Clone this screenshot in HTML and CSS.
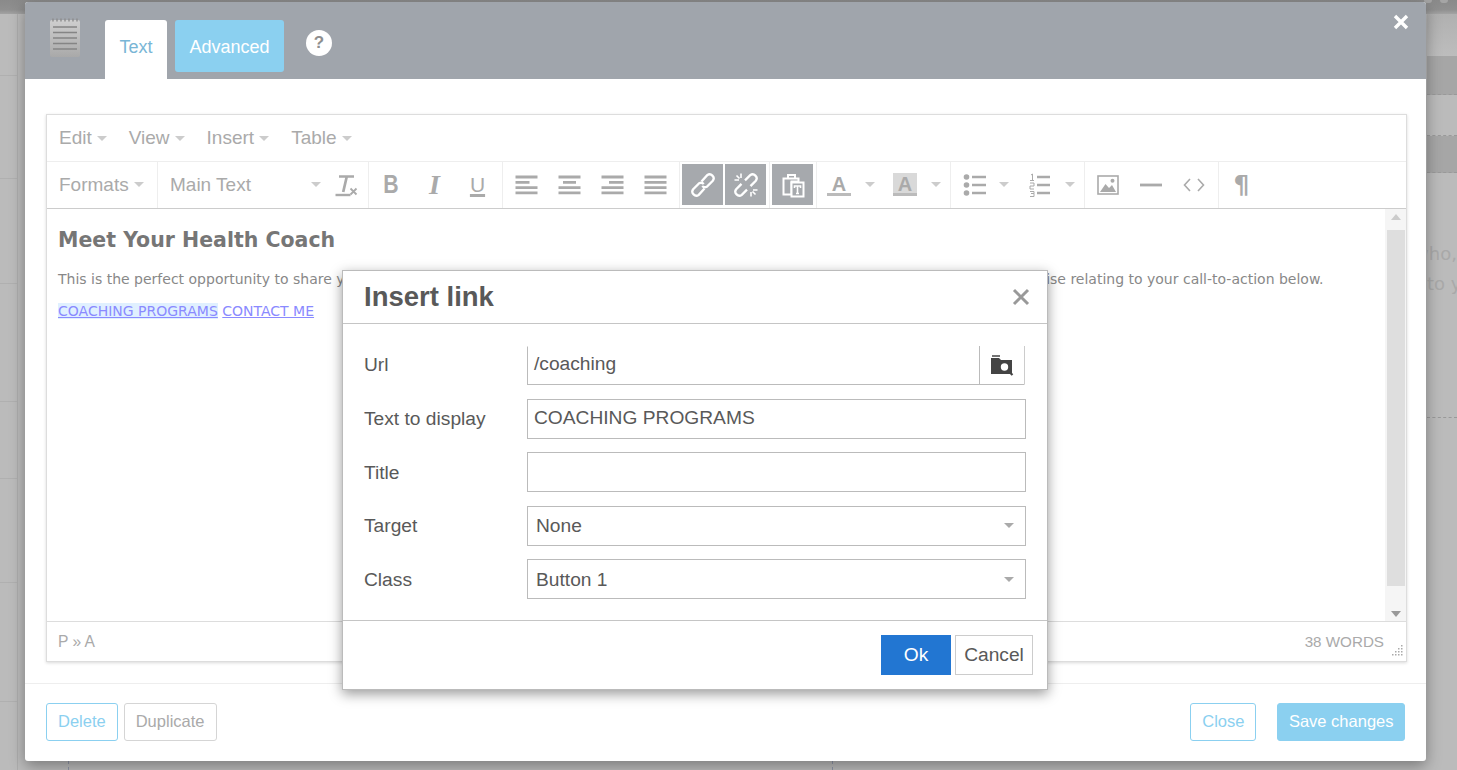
FILE: index.html
```html
<!DOCTYPE html>
<html lang="en">
<head>
<meta charset="utf-8">
<title>Insert link</title>
<link rel="stylesheet" href="styles.css">
</head>
<body>
<div class="page">
  <div class="strip"><i class="blob"></i><i class="blob"></i></div>
  <div class="columns">
    <div class="rail-left">
      <div class="lrow r1"></div><div class="lrow r2"></div><div class="lrow r3"></div><div class="lrow r4"></div><div class="lrow r5"></div><div class="lrow r6"></div><div class="lrow r7"></div>
    </div>
    <div class="center"><div class="ticks"><i class="tick"></i><i class="tick tick2"></i></div></div>
    <div class="rail-right">
      <div class="rrow s1"></div>
      <div class="rrow s2"></div>
      <div class="rrow s3"></div>
      <div class="rrow s4"></div>
      <div class="rrow s5"><p class="bgtext bg1">who,</p><p class="bgtext">to you</p></div>
    </div>
  </div>
</div>

<div class="modal">
  <header class="mhead">
    <svg class="notepad" width="32" height="40" viewBox="0 0 32 40">
      <defs><linearGradient id="np" x1="0" y1="0" x2="0" y2="1"><stop offset="0" stop-color="#cfcfcf"/><stop offset="1" stop-color="#a9a9a9"/></linearGradient></defs>
      <rect x="1" y="2" width="30" height="37" rx="2" fill="url(#np)"/>
      <path d="M4 0.5v3M8 0.5v3M12 0.5v3M16 0.5v3M20 0.5v3M24 0.5v3M28 0.5v3" stroke="#8c8c8c" stroke-width="1.4"/>
      <path d="M4 9h24M4 14.500h24M4 20h24M4 25.500h24M4 31h24" stroke="#858585" stroke-width="1.600"/>
    </svg>
    <a class="tab tab-on">Text</a>
    <a class="tab tab-off">Advanced</a>
    <span class="help">?</span>
    <svg class="mclose" width="16" height="16" viewBox="0 0 16 16"><path d="M2 2l12 12M14 2L2 14" stroke="#fff" stroke-width="3.4"/></svg>
  </header>

  <div class="mbody">
    <div class="editor">
      <div class="menubar">
        <span class="mi">Edit<i class="caret"></i></span>
        <span class="mi">View<i class="caret"></i></span>
        <span class="mi">Insert<i class="caret"></i></span>
        <span class="mi">Table<i class="caret"></i></span>
      </div>
      <div class="toolbar">
        <div class="grp grp-formats"><span class="mi">Formats<i class="caret"></i></span></div>
        <div class="grp grp-font">
          <span class="listbox">Main Text<i class="caret"></i></span>
          <span class="btn">
            <svg width="26" height="26" viewBox="0 0 26 26"><path d="M6 4.500h15M13.800 4.500L10.200 20" stroke="#aaa" stroke-width="2.700" fill="none"/><path d="M2.500 23h15" stroke="#aaa" stroke-width="2.400"/><path d="M17.500 16.500l6 6M23.500 16.500l-6 6" stroke="#aaa" stroke-width="1.800"/></svg>
          </span>
        </div>
        <div class="grp">
          <span class="btn t-b"><b class="glyph-b">B</b></span>
          <span class="btn t-i">I</span>
          <span class="btn t-u">U</span>
        </div>
        <div class="grp">
          <span class="btn"><svg width="24" height="20" viewBox="0 0 24 20"><path d="M1.500 2h22M1.500 7.300h14M1.500 12.600h22M1.500 17.900h22" stroke="#aaa" stroke-width="2.800"/></svg></span>
          <span class="btn"><svg width="24" height="20" viewBox="0 0 24 20"><path d="M1.500 2h22M6 7.300h13M1.500 12.600h22M1.500 17.900h22" stroke="#aaa" stroke-width="2.800"/></svg></span>
          <span class="btn"><svg width="24" height="20" viewBox="0 0 24 20"><path d="M1.500 2h22M9 7.300h14.500M1.500 12.600h22M1.500 17.900h22" stroke="#aaa" stroke-width="2.800"/></svg></span>
          <span class="btn"><svg width="24" height="20" viewBox="0 0 24 20"><path d="M1.500 2h22M1.500 7.300h22M1.500 12.600h22M1.500 17.900h22" stroke="#aaa" stroke-width="2.800"/></svg></span>
        </div>
        <div class="grp grp-t">
          <span class="btn on"><svg width="26" height="26" viewBox="0 0 26 26" fill="none" stroke="#fff" stroke-width="2.300"><path d="M11.500 9.500L17.200 3.200A4 4 0 0 1 22.800 8.800L16.800 14.800A4 4 0 0 1 12.200 14"/><path d="M14.500 16.500L8.800 22.800A4 4 0 0 1 3.200 17.200L9.200 11.200A4 4 0 0 1 13.800 12"/></svg></span>
          <span class="btn on"><svg width="26" height="26" viewBox="0 0 26 26" fill="none" stroke="#fff" stroke-width="2.300"><path d="M12 8.400L17.200 3.200A4 4 0 0 1 22.800 8.800L17.500 14.100"/><path d="M14 17.600L8.800 22.800A4 4 0 0 1 3.200 17.200L8.500 11.900"/><path d="M8 1.500v4.500M1.500 8h4.500M3.500 3.500l3 3M18 24.500v-4.500M24.500 18h-4.500M22.500 22.500l-3-3" stroke-width="1.600"/></svg></span>
        </div>
        <div class="grp grp-t">
          <span class="btn on"><svg width="24" height="26" viewBox="0 0 24 26"><path d="M2.500 6.500h15v3h-7v13h-8z" fill="none" stroke="#fff" stroke-width="2"/><path d="M7 6V3h7v3" fill="none" stroke="#fff" stroke-width="2"/><rect x="10" y="10" width="13" height="15" fill="#fff" stroke="#fff"/><rect x="11.500" y="11.500" width="10" height="12" fill="#a6a9ad"/><path d="M13.500 16v-2h6v2M16.500 14v7.500M15 21.500h3" stroke="#fff" stroke-width="1.600" fill="none"/></svg></span>
        </div>
        <div class="grp grp-t">
          <span class="split"><span class="swatch">A</span><i class="caret"></i></span>
          <span class="split"><span class="swatch swatch-bg">A</span><i class="caret"></i></span>
        </div>
        <div class="grp grp-t">
          <span class="split"><svg width="24" height="22" viewBox="0 0 24 22"><circle cx="3.500" cy="3" r="2.800" fill="#aaa"/><circle cx="3.500" cy="11" r="2.800" fill="#aaa"/><circle cx="3.500" cy="19" r="2.800" fill="#aaa"/><path d="M9 3h14M9 11h14M9 19h14" stroke="#aaa" stroke-width="2.600"/></svg><i class="caret"></i></span>
          <span class="split split-num"><svg width="22" height="24" viewBox="0 0 22 24"><path d="M2 2l1.500-1v6M1 7.500h4M1 10h4v3H1v3h4M1 18.500h4v2H2h3v3H1" stroke="#aaa" stroke-width="1" fill="none"/><path d="M8 4h13M8 12h13M8 20h13" stroke="#aaa" stroke-width="2.600"/></svg><i class="caret"></i></span>
        </div>
        <div class="grp">
          <span class="btn"><svg width="22" height="20" viewBox="0 0 22 20"><rect x="1" y="1" width="20" height="18" fill="none" stroke="#aaa" stroke-width="1.600"/><path d="M3 17l5.500-8 3.500 4 3-3 4 7z" fill="#aaa"/><circle cx="15.500" cy="5.800" r="2" fill="#aaa"/></svg></span>
          <span class="btn"><svg width="24" height="4" viewBox="0 0 24 4"><path d="M1 2h22" stroke="#aaa" stroke-width="2.800"/></svg></span>
          <span class="btn"><svg width="22" height="14" viewBox="0 0 22 14" fill="none" stroke="#aaa" stroke-width="1.600"><path d="M7 1L1.500 7 7 13M15 1l5.500 6-5.500 6"/></svg></span>
        </div>
        <div class="grp grp-last">
          <span class="btn t-p">¶</span>
        </div>
      </div>

      <div class="content">
        <div class="doc">
          <h1 class="doc-h">Meet Your Health Coach</h1>
          <p class="doc-p">This is the perfect opportunity to share your story, your background, and what led you here, along with the training, results, and your expertise relating to your call-to-action below.</p>
          <p class="doc-l"><a class="lnk sel">COACHING PROGRAMS</a> <a class="lnk">CONTACT ME</a></p>
        </div>
        <div class="scroll">
          <i class="sc-up"></i>
          <div class="thumb"></div>
          <i class="sc-down"></i>
        </div>
      </div>

      <div class="status">
        <span class="path">P » A</span>
        <span class="words">38 WORDS</span>
        <svg class="grip" width="14" height="14" viewBox="0 0 14 14" fill="#aaa"><rect x="11" y="1" width="1.500" height="1.500"/><rect x="11" y="4" width="1.500" height="1.500"/><rect x="8" y="4" width="1.500" height="1.500"/><rect x="11" y="7" width="1.500" height="1.500"/><rect x="8" y="7" width="1.500" height="1.500"/><rect x="5" y="7" width="1.500" height="1.500"/><rect x="11" y="10" width="1.500" height="1.500"/><rect x="8" y="10" width="1.500" height="1.500"/><rect x="5" y="10" width="1.500" height="1.500"/><rect x="2" y="10" width="1.500" height="1.500"/></svg>
      </div>
    </div>
  </div>

  <footer class="mfoot">
    <a class="fb fb-line">Delete</a>
    <a class="fb fb-grey">Duplicate</a>
    <span class="spacer"></span>
    <a class="fb fb-line">Close</a>
    <a class="fb fb-solid">Save changes</a>
  </footer>
</div>

<div class="dialog">
  <div class="d-head">
    <span class="d-title">Insert link</span>
    <svg width="18" height="18" viewBox="0 0 18 18"><path d="M2 2l14 14M16 2L2 16" stroke="#999" stroke-width="3"/></svg>
  </div>
  <div class="d-body">
    <div class="d-row">
      <label class="d-label">Url</label>
      <div class="d-field d-url">
        <span class="d-val d-up">/coaching</span>
        <span class="d-browse"><svg width="24" height="21" viewBox="0 0 24 21"><path d="M1 3h8l2 2h11v14H1z" fill="#444"/><path d="M2 1h8" stroke="#444" stroke-width="1.500"/><circle cx="14.500" cy="12" r="4.600" fill="#fff" stroke="#444" stroke-width="1.800"/><path d="M18 15.500l4.500 4.500" stroke="#444" stroke-width="2.200"/></svg></span>
      </div>
    </div>
    <div class="d-row">
      <label class="d-label">Text to display</label>
      <div class="d-field"><span class="d-val d-up">COACHING PROGRAMS</span></div>
    </div>
    <div class="d-row">
      <label class="d-label d-low">Title</label>
      <div class="d-field"></div>
    </div>
    <div class="d-row">
      <label class="d-label">Target</label>
      <div class="d-field d-sel"><span class="d-val">None</span><i class="caret"></i></div>
    </div>
    <div class="d-row">
      <label class="d-label d-low">Class</label>
      <div class="d-field d-sel"><span class="d-val d-low">Button 1</span><i class="caret"></i></div>
    </div>
  </div>
  <div class="d-foot">
    <a class="d-ok">Ok</a>
    <a class="d-cancel">Cancel</a>
  </div>
</div>
</body>
</html>
```
FILE: styles.css
```css
* { box-sizing: border-box; }
html, body { margin: 0; height: 770px; overflow: hidden; }
body { background: #bbb; font-family: "Liberation Sans", Arial, sans-serif; color: #555; position: relative; }

/* dimmed page behind the modal */
.page { height: 770px; display: flex; flex-direction: column; }
.strip { height: 14px; background: linear-gradient(#8a8a8a, #909090 70%, #a3a3a3); display: flex; justify-content: flex-end; gap: 8px; padding-right: 9px; }
.blob { width: 8px; height: 3px; border-radius: 0 0 4px 4px; background: #a5a5a5; }
.columns { flex: 1; display: flex; }
.rail-left { width: 18px; border-right: 1px solid #adadad; }
.lrow { border-bottom: 1px solid #b0b0b0; }
.r1 { height: 62px; } .r2 { height: 103px; } .r3 { height: 105px; } .r4 { height: 118px; } .r5 { height: 77px; } .r6 { height: 104px; } .r7 { height: 119px; }
.center { flex: 1; display: flex; flex-direction: column; justify-content: flex-end; }
.ticks { height: 9px; display: flex; padding-left: 50px; }
.tick { border-left: 1px dashed #8f96a8; }
.tick2 { margin-left: 763px; }
.rail-right { width: 30px; }
.rrow { border-bottom: 1px dashed #999; }
.s1 { height: 42px; border: 0; background: linear-gradient(#b0b0b0, #bdbdbd); }
.s2 { height: 39px; background: #a6a6a6; }
.s3 { height: 41px; background: #bbb; }
.s4 { height: 37px; background: #a6a6a6; }
.s5 { height: 245px; overflow: hidden; padding-top: 69px; }
.bgtext { margin: 0 0 7px; font: 18px/23px "DejaVu Sans", sans-serif; color: #a9a9a9; white-space: nowrap; }
.bg1 { margin-left: -13px; }

/* modal */
.modal { position: absolute; left: 25px; top: 2px; width: 1401px; height: 759px; background: #fff; border-radius: 3px; box-shadow: 0 5px 15px rgba(0,0,0,.35); display: flex; flex-direction: column; }
.mhead { height: 77px; background: #a0a5ac; border-radius: 3px 3px 0 0; position: relative; display: flex; align-items: flex-start; padding: 18px 0 0 24px; flex: none; }
.notepad { margin-top: -2px; margin-right: 24px; }
.tab { height: 59px; font-size: 18px; line-height: 55px; text-align: center; border-radius: 3px 3px 0 0; }
.tab-on { width: 62px; background: #fff; color: #79b6d6; }
.tab-off { width: 109px; height: 52px; margin-left: 8px; background: #8bd0f0; color: #fff; line-height: 55px; border-radius: 3px; }
.help { width: 26px; height: 26px; border-radius: 50%; background: #fff; color: #8f8f8f; font-weight: bold; font-size: 17px; line-height: 26px; text-align: center; margin: 10px 0 0 22px; }
.mclose { position: absolute; right: 17px; top: 12px; }
.mbody { flex: 1; padding: 35px 19px 21px 21px; min-height: 0; }

/* editor */
.editor { height: 548px; border: 1px solid #ddd; box-shadow: 0 1px 3px rgba(0,0,0,.15); display: flex; flex-direction: column; color: #aaa; font-size: 19px; }
.menubar { height: 47px; border-bottom: 1px solid #eee; display: flex; align-items: center; padding-left: 12px; gap: 22px; flex: none; }
.mi { display: flex; align-items: center; white-space: nowrap; }
.caret { display: inline-block; width: 0; height: 0; border-left: 5px solid transparent; border-right: 5px solid transparent; border-top: 5px solid #ccc; margin-left: 5px; }
.toolbar { height: 47px; border-bottom: 1px solid #ccc; display: flex; flex: none; }
.grp { display: flex; gap: 2px; padding: 2px 4px 3px 2px; border-left: 1px solid #eee; align-items: center; }
.grp-t { padding-right: 3px; gap: 4px; }
.grp-t .btn + .btn { margin-left: -2px; }
.grp-formats { width: 110px; border-left: 0; padding-left: 12px; }
.grp-font { width: 211px; padding-left: 12px; padding-right: 2px; justify-content: space-between; }
.listbox { display: flex; align-items: center; width: 153px; }
.listbox .caret { margin-left: auto; margin-right: 2px; }
.btn { width: 41px; height: 41px; display: flex; align-items: center; justify-content: center; flex: none; }
.btn.on { background: #a6a9ad; }
.t-b { font: 25px "Liberation Sans", sans-serif; }
.glyph-b { display: block; font-weight: bold; transform: scaleX(.85); }
.t-i { font: italic bold 28px "Liberation Serif", serif; }
.t-u { font: 21px/20px "Liberation Sans", sans-serif; text-decoration: underline; text-underline-offset: 2px; text-decoration-thickness: 3px; }
.t-p { font: bold 25px "DejaVu Sans", sans-serif; }
.split { width: 62px; height: 41px; display: flex; align-items: center; padding-left: 10px; flex: none; }
.split .caret { margin-left: auto; margin-right: 6px; }
.split-num { padding-left: 10px; }
.swatch { width: 24px; height: 23px; font: bold 20px/22px "Liberation Sans", sans-serif; text-align: center; border-bottom: 3px solid #bbb; margin-left: -2px; }
.swatch-bg { background: #d9d9d9; }
.grp-last { border-left: 1px solid #eee; }

.content { flex: 1; display: flex; min-height: 0; }
.doc { flex: 1; padding: 16px 0 0 11px; min-width: 0; overflow: hidden; }
.doc-h { margin: 0; font: bold 20.500px/30px "DejaVu Sans", sans-serif; color: #767676; }
.doc-p { margin: 15px 0 0; font: 14px/18px "DejaVu Sans", sans-serif; color: #888; white-space: nowrap; }
.doc-l { margin: 14px 0 0; font: 14px/18px "DejaVu Sans", sans-serif; color: #888; white-space: nowrap; }
.lnk { color: #8a8aff; text-decoration: underline; }
.sel { background: #e0f0ff; }
.scroll { width: 21px; background: #f5f5f5; display: flex; flex-direction: column; align-items: center; padding: 5px 1px 4px; flex: none; }
.thumb { width: 18px; flex: 1; background: #dedede; margin: 10px 0 25px; }
.sc-up, .sc-down { width: 0; height: 0; border-left: 5px solid transparent; border-right: 5px solid transparent; }
.sc-up { border-bottom: 6px solid #ccc; }
.sc-down { border-top: 6px solid #999; }
.status { height: 40px; border-top: 1px solid #ddd; display: flex; align-items: center; padding: 0 22px 0 11px; font-size: 15.200px; position: relative; flex: none; }
.path { font-size: 15.600px; }
.words { margin-left: auto; }
.grip { position: absolute; right: 2px; bottom: 3px; }

/* modal footer */
.mfoot { height: 78px; flex: none; border-top: 1px solid #eee; display: flex; align-items: flex-start; padding: 19px 21px 0 21px; }
.spacer { flex: 1; }
.fb { height: 38px; border-radius: 3px; font-size: 16.500px; line-height: 34px; padding: 0 11px; border: 1px solid; white-space: nowrap; }
.fb-line { border-color: #8bd0f0; color: #8bd0f0; }
.fb-grey { border-color: #d5d5d5; color: #aaa; margin-left: 6px; }
.fb-solid { background: #8bd0f0; border-color: #8bd0f0; color: #fff; margin-left: 21px; padding: 0 10.500px; }

/* insert link dialog */
.dialog { position: absolute; left: 342px; top: 270px; width: 706px; height: 420px; background: #fff; border: 1px solid #bbb; box-shadow: 0 4px 12px rgba(0,0,0,.4); display: flex; flex-direction: column; font-size: 19.200px; color: #595959; }
.d-head { height: 53px; border-bottom: 1px solid #c5c5c5; display: flex; align-items: center; justify-content: space-between; padding: 0 17px 0 21px; flex: none; }
.d-title { font-size: 27.500px; font-weight: bold; }
.d-body { flex: 1; padding: 21px 21px 0; display: flex; flex-direction: column; gap: 13.500px; }
.d-row { display: flex; align-items: center; height: 40px; }
.d-label { width: 163px; flex: none; }
.d-low { padding-top: 2px; }
.d-field { width: 499px; height: 40px; border: 1px solid #bbb; display: flex; align-items: center; padding-left: 6px; }
.d-url { border-top-color: transparent; border-right-color: transparent; width: 498px; padding-right: 0; height: 39px; }
.d-val { flex: 1; }
.d-up { margin-top: -2px; }
.d-browse { width: 46px; height: 38px; border-left: 1px solid #bbb; border-right: 1px solid #ccc; display: flex; align-items: center; justify-content: center; margin-right: -1px; }
.d-sel { padding-left: 8px; }
.d-sel .caret { border-top-color: #aaa; margin-right: 11px; }
.d-foot { height: 69px; border-top: 1px solid #c5c5c5; display: flex; justify-content: flex-end; align-items: flex-start; gap: 4px; padding: 14px 14px 0 0; flex: none; }
.d-ok { width: 70px; height: 40px; background: #2276d2; color: #fff; text-align: center; line-height: 39px; }
.d-cancel { width: 78px; height: 40px; border: 1px solid #ccc; text-align: center; line-height: 37px; }
```
